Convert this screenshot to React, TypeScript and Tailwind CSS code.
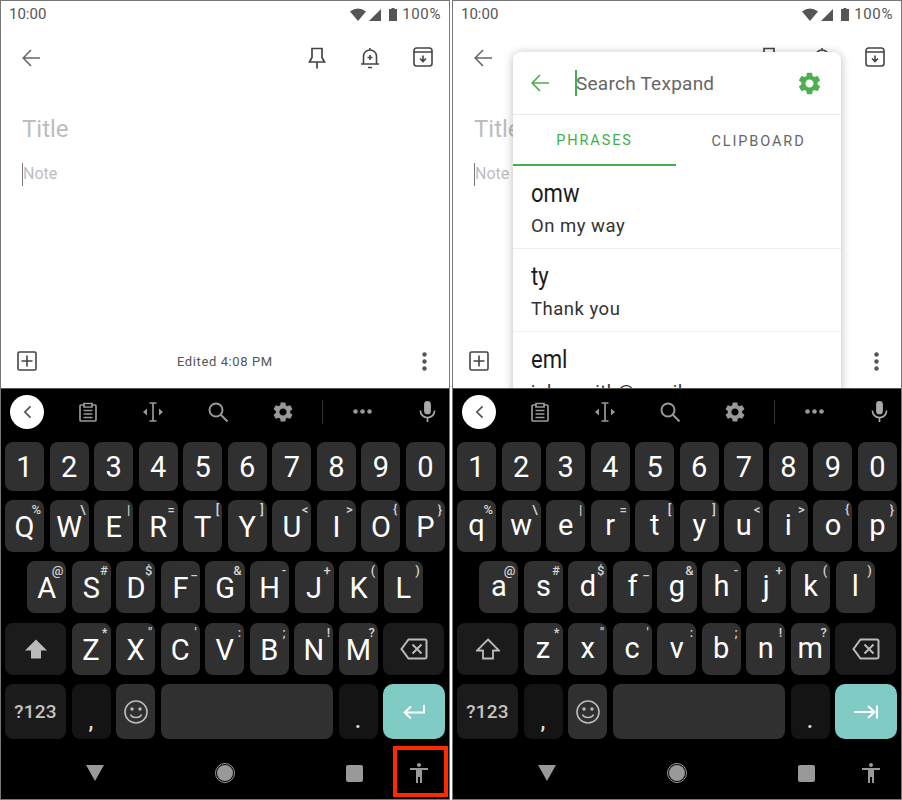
import type { ReactNode } from 'react';

const GEAR =
  'M19.14 12.94c.04-.3.06-.61.06-.94 0-.32-.02-.64-.07-.94l2.03-1.58c.18-.14.23-.41.12-.61l-1.92-3.32c-.12-.22-.37-.29-.59-.22l-2.39.96c-.5-.38-1.03-.7-1.62-.94l-.36-2.54c-.04-.24-.24-.41-.48-.41h-3.84c-.24 0-.43.17-.47.41l-.36 2.54c-.59.24-1.13.57-1.62.94l-2.39-.96c-.22-.08-.47 0-.59.22L2.74 8.87c-.12.21-.08.47.12.61l2.03 1.58c-.05.3-.09.63-.09.94s.02.64.07.94l-2.03 1.58c-.18.14-.23.41-.12.61l1.92 3.32c.12.22.37.29.59.22l2.39-.96c.5.38 1.03.7 1.62.94l.36 2.54c.05.24.24.41.48.41h3.84c.24 0 .44-.17.47-.41l.36-2.54c.59-.24 1.13-.56 1.62-.94l2.39.96c.22.08.47 0 .59-.22l1.92-3.32c.12-.22.07-.47-.12-.61l-2.01-1.58zM12 15.6c-1.98 0-3.6-1.62-3.6-3.6s1.62-3.6 3.6-3.6 3.6 1.62 3.6 3.6-1.62 3.6-3.6 3.6z';

const ROW_Q: [string, string][] = [
  ['Q', '%'], ['W', '\\'], ['E', '|'], ['R', '='], ['T', '['],
  ['Y', ']'], ['U', '<'], ['I', '>'], ['O', '{'], ['P', '}'],
];
const ROW_A: [string, string][] = [
  ['A', '@'], ['S', '#'], ['D', '$'], ['F', '_'], ['G', '&'],
  ['H', '-'], ['J', '+'], ['K', '('], ['L', ')'],
];
const ROW_Z: [string, string][] = [
  ['Z', '*'], ['X', '"'], ['C', "'"], ['V', ':'], ['B', ';'], ['N', '!'], ['M', '?'],
];

const PHRASES = [
  { short: 'omw', full: 'On my way' },
  { short: 'ty', full: 'Thank you' },
  { short: 'eml', full: 'johnsmith@gmail.com' },
];

function StatusBar() {
  return (
    <div className="flex h-[27px] items-center pl-[8px] pr-[8px] text-[15px] text-[#555]">
      <span>10:00</span>
      <svg viewBox="0 0 16 13" className="ml-auto h-[13px] w-[16px] fill-[#555]">
        <path d="M0 3.5Q8-2.5 16 3.5L8 13Z" />
      </svg>
      <svg viewBox="0 0 12 12" className="ml-[3px] h-[12px] w-[12px] fill-[#555]">
        <path d="M12 0V12H0Z" />
      </svg>
      <svg viewBox="0 0 8 13" className="ml-[8px] h-[13px] w-[8px] fill-[#555]">
        <path d="M2.5 0H5.5V1H8V13H0V1H2.5Z" />
      </svg>
      <span className="ml-[5px] tracking-[0.6px]">100%</span>
    </div>
  );
}

function NoteToolbar() {
  return (
    <div className="flex h-[60px] items-center">
      <svg viewBox="0 0 18 18" className="ml-[21px] h-[18px] w-[18px] fill-none stroke-[#666] stroke-[1.6]">
        <path d="M18 9H1.5M9 1 1.2 9 9 17" />
      </svg>
      <div className="ml-auto flex">
        <div className="flex w-[53px] justify-center pl-[1px]">
          <svg viewBox="0 0 18 22" className="h-[22px] w-[18px] fill-none stroke-[#444] stroke-[1.7]">
            <path d="M4 1.5H14V10.5L16.5 15H1.5L4 10.5ZM9 15V21.5" />
          </svg>
        </div>
        <div className="flex w-[53px] justify-center">
          <svg viewBox="0 0 20 22" className="h-[22px] w-[20px] fill-none stroke-[#444] stroke-[1.6]">
            <path d="M1 17H19M3.5 17V9.5C3.5 5.5 6.5 3 10 3S16.5 5.5 16.5 9.5V17M10 1V3M8 20.5H12M10 8V13M7.5 10.5H12.5" />
          </svg>
        </div>
        <div className="flex w-[53px] justify-center">
          <svg viewBox="0 0 20 20" className="h-[20px] w-[20px] fill-none stroke-[#444] stroke-[1.6]">
            <path d="M3.5 1H16.5A2.5 2.5 0 0 1 19 3.5V16.5A2.5 2.5 0 0 1 16.5 19H3.5A2.5 2.5 0 0 1 1 16.5V3.5A2.5 2.5 0 0 1 3.5 1ZM1 5H19M10 8.5V14M7 11.5 10 14.5 13 11.5" />
          </svg>
        </div>
      </div>
    </div>
  );
}

function TexpandPopup() {
  return (
    <div className="absolute left-[60px] top-[51px] w-[328px] rounded-[8px] bg-white font-['Roboto',sans-serif] shadow-[0_1px_10px_rgba(0,0,0,0.28)]">
      <div className="flex h-[63px] items-center border-b border-[#eaeaea]">
        <svg viewBox="0 0 18 18" className="ml-[18px] h-[18px] w-[18px] fill-none stroke-[#4caf50] stroke-[1.7]">
          <path d="M18 9H1.5M9 1 1.2 9 9 17" />
        </svg>
        <div className="ml-[26px] h-[26px] w-[2px] bg-[#3db04a]" />
        <span className="ml-[-1px] pt-[2px] text-[19px] tracking-[0.25px] text-[#666]">Search Texpand</span>
        <svg viewBox="0 0 24 24" className="ml-auto mr-[18px] h-[27px] w-[27px] fill-[#4caf50]">
          <path d={GEAR} />
        </svg>
      </div>
      <div className="flex h-[51px] text-[14.5px] tracking-[1.9px]">
        <div className="flex w-[163px] items-center justify-center border-b-2 border-[#3db04a] pt-[2px] text-[#3db04a]">
          PHRASES
        </div>
        <div className="flex flex-1 items-center justify-center pt-[2px] text-[#666]">CLIPBOARD</div>
      </div>
      {PHRASES.map((p) => (
        <div key={p.short} className="h-[83px] border-b border-[#eee] pl-[18px] pt-[13px]">
          <div className="origin-left scale-x-[0.85] text-[26px] leading-[28px] text-[#1c1c1c]">{p.short}</div>
          <div className="mt-[7px] text-[18.5px] leading-[24px] tracking-[0.5px] text-[#333]">{p.full}</div>
        </div>
      ))}
    </div>
  );
}

function NoteArea({ popup }: { popup: boolean }) {
  return (
    <div className="relative flex h-[387px] flex-col overflow-hidden bg-white font-['Roboto',sans-serif]">
      <StatusBar />
      <NoteToolbar />
      <div className="mt-[25px] pl-[21px] text-[24px] leading-[32px] text-[#bdbdbd]">Title</div>
      <div className="mt-[17px] flex items-center pl-[21px] text-[16px] leading-[24px] text-[#bdbdbd]">
        <div className="h-[23px] w-[1px] bg-[#777]" />
        <span>Note</span>
      </div>
      <div className="mt-auto flex h-[54px] items-center">
        <svg viewBox="0 0 20 20" className="ml-[16px] h-[20px] w-[20px] fill-none stroke-[#444] stroke-[1.6]">
          <path d="M2.5 1H17.5A1.5 1.5 0 0 1 19 2.5V17.5A1.5 1.5 0 0 1 17.5 19H2.5A1.5 1.5 0 0 1 1 17.5V2.5A1.5 1.5 0 0 1 2.5 1ZM10 4.5V15.5M4.5 10H15.5" />
        </svg>
        {!popup && (
          <span className="ml-[140px] pt-[1px] text-[13px] tracking-[0.6px] text-[#555]">Edited 4:08 PM</span>
        )}
        <svg viewBox="0 0 5 19" className="ml-auto mr-[22px] h-[19px] w-[5px] fill-[#555]">
          <circle cx="2.5" cy="2.5" r="2.2" />
          <circle cx="2.5" cy="9.5" r="2.2" />
          <circle cx="2.5" cy="16.5" r="2.2" />
        </svg>
      </div>
      {popup && <TexpandPopup />}
    </div>
  );
}

function KeyToolbar() {
  return (
    <div className="flex h-[53px] items-center pb-[8px]">
      <div className="ml-[9px] flex h-[34px] w-[34px] items-center justify-center rounded-full bg-white">
        <svg viewBox="0 0 10 16" className="h-[14px] w-[9px] fill-none stroke-[#555] stroke-2">
          <path d="M8.5 1.5 2 8l6.5 6.5" />
        </svg>
      </div>
      <svg viewBox="0 0 18 20" className="ml-[35px] h-[20px] w-[18px] fill-none stroke-[#999] stroke-[1.7]">
        <path d="M5 3H2A1 1 0 0 0 1 4V18A1 1 0 0 0 2 19H16A1 1 0 0 0 17 18V4A1 1 0 0 0 16 3H13M5 1.5H13V5H5ZM4.5 8.5H13.5M4.5 12H13.5M4.5 15.5H13.5" />
      </svg>
      <svg viewBox="0 0 22 20" className="ml-[45px] h-[20px] w-[22px] fill-none stroke-[#999] stroke-[1.7]">
        <path d="M7.5 1H14.5M7.5 19H14.5M11 1V19" />
        <path d="M5 6.5V13.5L1 10ZM17 6.5V13.5L21 10Z" className="fill-[#999] stroke-0" />
      </svg>
      <svg viewBox="0 0 20 20" className="ml-[44px] h-[20px] w-[20px] fill-none stroke-[#999] stroke-2">
        <circle cx="8" cy="8" r="6.5" />
        <path d="M12.8 12.8 19.5 19.5" />
      </svg>
      <svg viewBox="0 0 24 24" className="ml-[43px] h-[24px] w-[24px] fill-[#999]">
        <path d={GEAR} />
      </svg>
      <div className="ml-[27px] h-[24px] w-[1px] bg-[#333]" />
      <svg viewBox="0 0 19 5" className="ml-[30px] h-[5px] w-[19px] fill-[#999]">
        <circle cx="2.5" cy="2.5" r="2.3" />
        <circle cx="9.5" cy="2.5" r="2.3" />
        <circle cx="16.5" cy="2.5" r="2.3" />
      </svg>
      <svg viewBox="0 0 18 22" className="ml-[47px] h-[21px] w-[17px]">
        <path d="M9 0A3.6 3.6 0 0 0 5.4 3.6V10.4A3.6 3.6 0 0 0 12.6 10.4V3.6A3.6 3.6 0 0 0 9 0Z" className="fill-[#aaa]" />
        <path d="M1.5 10A7.5 7.5 0 0 0 16.5 10M9 17.5V22" className="fill-none stroke-[#aaa] stroke-[1.8]" />
      </svg>
    </div>
  );
}

function LetterKey({ label, hint, lower }: { label: string; hint: string; lower: boolean }) {
  return (
    <div
      className={`relative flex h-full w-[39.05px] items-center justify-center rounded-[8px] bg-[#303030] text-[29px] text-white ${lower ? '' : 'pt-[3px]'}`}
    >
      {lower ? label.toLowerCase() : label}
      <span className="absolute right-[3px] top-[3px] text-[13px] font-medium leading-[14px] text-[#d4d4d4]">{hint}</span>
    </div>
  );
}

function WideKey({ className, children }: { className: string; children: ReactNode }) {
  return (
    <div className={`flex h-full items-center justify-center rounded-[8px] ${className}`}>{children}</div>
  );
}

function Keyboard({ lower }: { lower: boolean }) {
  return (
    <div className="flex flex-1 flex-col border-t border-[#555] bg-black font-['Roboto',sans-serif]">
      <KeyToolbar />
      <div className="flex h-[49px] gap-[5.5px] pl-[4px]">
        {'1234567890'.split('').map((n) => (
          <div
            key={n}
            className="flex h-full w-[39.05px] items-center justify-center rounded-[8px] bg-[#303030] pt-[3px] text-[29px] text-white"
          >
            {n}
          </div>
        ))}
      </div>
      <div className="mt-[9px] flex h-[52px] gap-[5.5px] pl-[4px]">
        {ROW_Q.map(([k, h]) => (
          <LetterKey key={k} label={k} hint={h} lower={lower} />
        ))}
      </div>
      <div className="mt-[9px] flex h-[52px] gap-[5.5px] pl-[26.3px]">
        {ROW_A.map(([k, h]) => (
          <LetterKey key={k} label={k} hint={h} lower={lower} />
        ))}
      </div>
      <div className="mt-[10px] flex h-[52px] gap-[5.5px] pl-[4px]">
        <WideKey className="w-[61px] bg-[#1b1b1b]">
          <svg
            viewBox="0 0 24 24"
            className={`h-[24px] w-[24px] ${lower ? 'fill-none stroke-[#bbb] stroke-[1.8]' : 'fill-[#bbb]'}`}
          >
            <path d="M12 2.5 23 13.5H17V21.5H7V13.5H1Z" />
          </svg>
        </WideKey>
        {ROW_Z.map(([k, h]) => (
          <LetterKey key={k} label={k} hint={h} lower={lower} />
        ))}
        <WideKey className="w-[61px] bg-[#1b1b1b]">
          <svg viewBox="0 0 28 22" className="h-[22px] w-[28px] fill-none stroke-[#bbb] stroke-2">
            <path d="M8.5 1.5H25A1.5 1.5 0 0 1 26.5 3V19A1.5 1.5 0 0 1 25 20.5H8.5L1.5 11ZM12.5 6.5 21.5 15.5M21.5 6.5 12.5 15.5" />
          </svg>
        </WideKey>
      </div>
      <div className="mt-[9px] flex h-[55px] gap-[5.5px] pl-[4px]">
        <WideKey className="w-[61px] bg-[#1b1b1b] pt-[2px] text-[19px] font-medium tracking-[0.2px] text-[#c4c4c4]">?123</WideKey>
        <WideKey className="w-[39px] bg-[#141414] pt-[18px] text-[20px] font-bold text-[#ddd]">,</WideKey>
        <WideKey className="w-[39px] bg-[#303030]">
          <svg viewBox="0 0 24 24" className="h-[24px] w-[24px] fill-none stroke-[#bbb] stroke-[1.6]">
            <circle cx="12" cy="12" r="11" />
            <path d="M6.5 14.5C8 18.5 16 18.5 17.5 14.5" />
            <circle cx="8" cy="9" r="0.9" className="fill-[#bbb]" />
            <circle cx="16" cy="9" r="0.9" className="fill-[#bbb]" />
          </svg>
        </WideKey>
        <WideKey className="w-[172.5px] bg-[#303030]">{null}</WideKey>
        <WideKey className="w-[39px] bg-[#141414] pt-[18px] text-[20px] font-bold text-[#ddd]">.</WideKey>
        <WideKey className="ml-[-0.5px] w-[62px] rounded-[10px] bg-[#80cbc4]">
          {lower ? (
            <svg viewBox="0 0 24 14" className="h-[14px] w-[24px] fill-none stroke-white stroke-2">
              <path d="M0 7H20M14 1 20.5 7 14 13M23 0.5V13.5" />
            </svg>
          ) : (
            <svg viewBox="0 0 22 14" className="h-[14px] w-[22px] fill-none stroke-white stroke-2">
              <path d="M21 0V7.5H2M8 1.5 1.5 7.5 8 13.5" />
            </svg>
          )}
        </WideKey>
      </div>
      <div className="flex flex-1 items-center pt-[8px]">
        <svg viewBox="0 0 18 16" className="ml-[85px] h-[16px] w-[18px] fill-[#999]">
          <path d="M0 0H18L9 16Z" />
        </svg>
        <div className="ml-[111px] flex h-[20px] w-[20px] items-center justify-center rounded-full border border-[#999]">
          <div className="h-[16px] w-[16px] rounded-full bg-[#999]" />
        </div>
        <div className="ml-[111px] h-[17px] w-[17px] rounded-[2px] bg-[#999]" />
        <div className="ml-[29px] flex h-[50px] w-[54px] items-center justify-center">
          <svg viewBox="0 0 24 24" className="h-[24px] w-[24px] fill-[#999]">
            <path d="M12 2c1.1 0 2 .9 2 2s-.9 2-2 2-2-.9-2-2 .9-2 2-2zm9 7h-6v13h-2v-6h-2v6H9V9H3V7h18v2z" />
          </svg>
        </div>
      </div>
    </div>
  );
}

function Phone({ lower, popup }: { lower: boolean; popup: boolean }) {
  return (
    <div className="flex h-[800px] w-[450px] flex-col border border-[#777]">
      <NoteArea popup={popup} />
      <Keyboard lower={lower} />
    </div>
  );
}

export default function App() {
  return (
    <div className="relative flex h-[800px] w-[902px] gap-[2px] overflow-hidden bg-white">
      <Phone lower={false} popup={false} />
      <Phone lower popup />
      <div className="absolute left-[393px] top-[746px] h-[51px] w-[55px] border-[4px] border-[#ff2a00]" />
    </div>
  );
}
